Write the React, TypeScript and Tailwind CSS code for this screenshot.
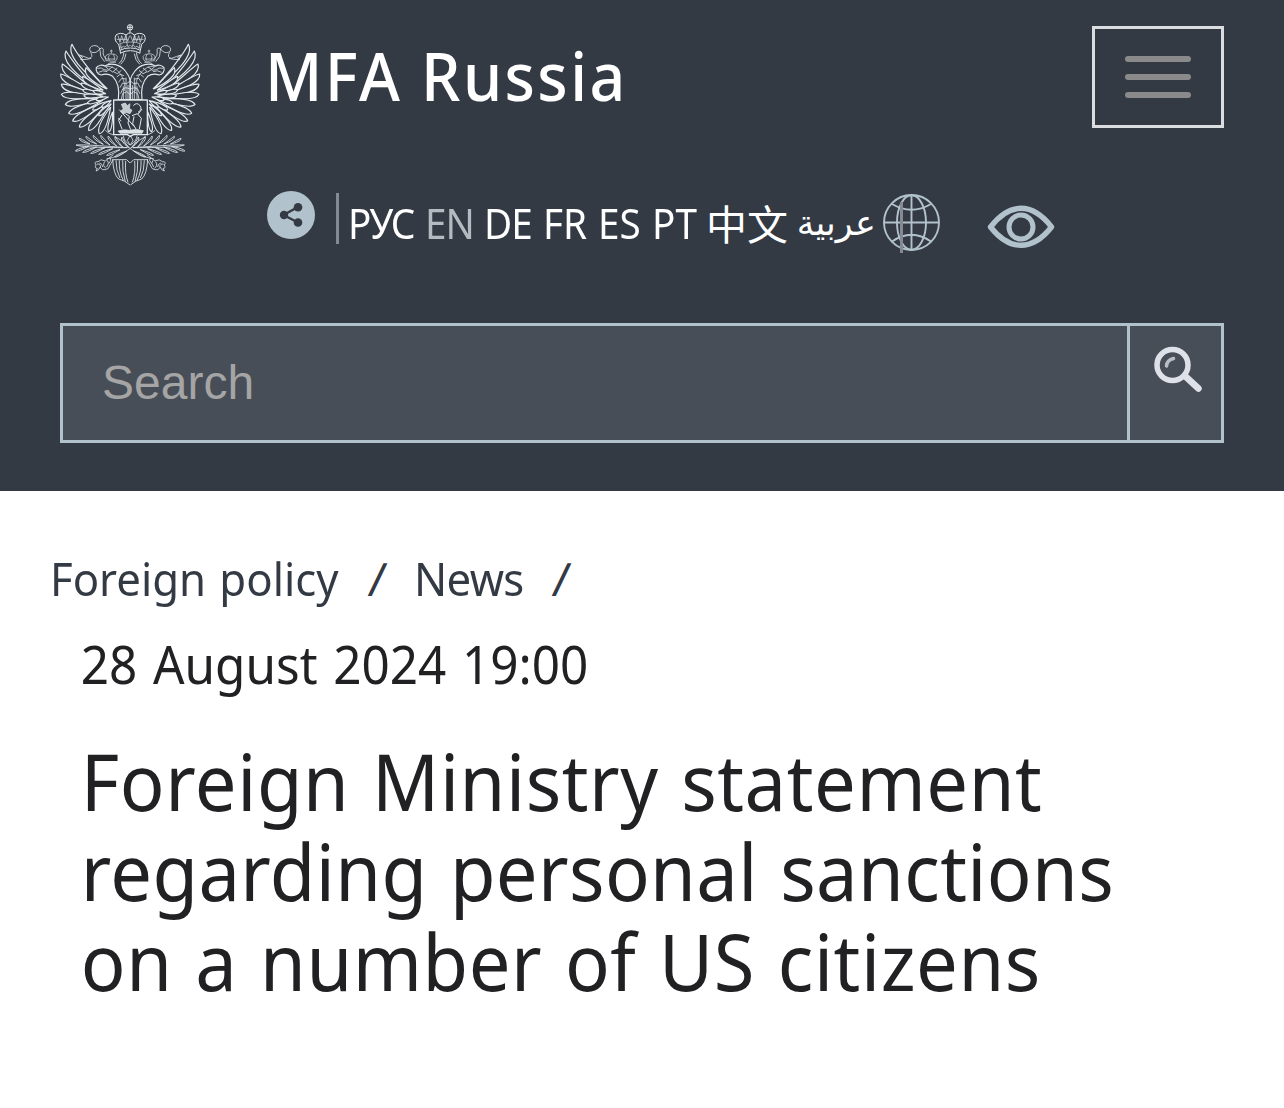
type Feather = [number, number, number, number, number];

// x/y of the root, x/y of the tip, width
const feathers: Feather[] = [
  [172, 222, 66, 88, 17],
  [135, 215, 48, 108, 16],
  [130, 224, 37, 147, 18],
  [132, 232, 32, 177, 18],
  [135, 240, 34, 208, 18],
  [140, 246, 34, 238, 18],
  [150, 252, 46, 268, 18],
  [158, 256, 56, 295, 18],
  [164, 262, 68, 318, 17],
  [170, 266, 88, 336, 17],
  [176, 270, 116, 346, 17],
  [182, 276, 148, 356, 17],
  [188, 290, 176, 350, 10],
  [170, 222, 108, 158, 14],
  [160, 226, 98, 184, 13],
  [158, 232, 94, 204, 12],
  [158, 238, 98, 224, 11],
  [160, 244, 102, 242, 11],
  [168, 250, 112, 264, 11],
  [176, 258, 128, 284, 11],
  [184, 266, 146, 302, 10],
  [168, 236, 130, 228, 9],
  [176, 246, 138, 254, 9],
  [184, 256, 156, 276, 9],
];

const leaves: Feather[] = [
  [232, 398, 78, 390, 5],
  [120, 387, 88, 370, 5],
  [140, 387, 108, 364, 5],
  [160, 388, 130, 361, 5],
  [180, 390, 153, 361, 5],
  [200, 393, 175, 363, 5],
  [218, 396, 196, 364, 5],
  [236, 398, 216, 366, 5],
  [116, 394, 76, 408, 5],
  [140, 396, 98, 412, 5],
  [165, 398, 122, 415, 5],
  [188, 401, 146, 418, 5],
  [210, 404, 170, 421, 5],
  [230, 408, 194, 426, 5],
];

// rounded blade, bowed outwards the more it points up
function featherPath([x1, y1, x2, y2, w]: Feather) {
  const dx = x2 - x1;
  const dy = y2 - y1;
  const len = Math.hypot(dx, dy);
  const ux = -dy / len;
  const uy = dx / len;
  const bow = Math.max(0, ux) * len * 0.14;
  const at = (t: number, off: number) =>
    `${(x1 + dx * t + ux * off).toFixed(1)} ${(y1 + dy * t + uy * off).toFixed(1)}`;
  return `M${x1} ${y1}C${at(0.4, w * 0.5 - bow)} ${at(0.88, w * 0.8 - bow)} ${x2} ${y2}C${at(0.92, -w * 0.8 - bow)} ${at(0.5, -w * 0.6 - bow)} ${x1} ${y1}`;
}

function EagleHalf() {
  return (
    <>
      {feathers.map((f) => (
        <path key={f.join()} d={featherPath(f)} fill="#333a44" strokeWidth="3.5" />
      ))}
      {leaves.map((f) => (
        <path key={f.join()} d={featherPath(f)} strokeWidth="2.6" />
      ))}
      {/* head and neck */}
      <path d="M205 254C210 218 202 198 188 184C176 176 164 176 154 180C144 178 136 170 139 158C145 149 158 149 164 153C184 142 210 148 226 168C234 178 238 186 240 194V254Z" fill="#333a44" strokeWidth="3.5" />
      <path d="M142 160q14-4 20 4l14 2M146 172q12-8 26-2M164 153l12 10l12-8M176 163l12 8l14-12M190 170l12 6l12-10M200 186l10-8l12 4M206 202l9-12l12 2M210 218l8-14l12 2l10-8M212 236l6-14l10-4l12 4M214 252l4-16l12-6l10 8M228 254v-66M220 254v-40M234 254v-44" strokeWidth="2.4" />
      <path d="M168 154q26-2 44 24q14 20 12 50" />
      {/* small crown with ribbon */}
      <path d="M168 137q-6-14 4-18q8-4 12-2q14-2 18 8q0 8-6 14zM172 132h24M178 136q-6-10 0-16M192 136q4-10-2-18M184 116v-12M180 108h8M174 146q10-6 24-4" />
      <path d="M164 140Q148 126 150 106Q148 90 130 92Q116 96 120 108Q132 118 144 108Q156 92 160 104Q156 124 172 134M122 112Q132 128 116 130Q102 124 88 120L98 127L92 134Q112 134 124 130" strokeWidth="2.4" />
      <path d="M222 112Q218 138 206 146M228 116Q226 136 212 148" strokeWidth="2.5" />
      {/* imperial crown */}
      <path d="M210 106L206 88Q190 76 198 60Q212 50 228 60Q238 52 240 54M210 106Q224 98 240 99M212 114Q224 107 240 107M210 106l2 10" strokeWidth="3" />
      <path d="M206 88Q222 80 240 81M204 62l6 20l5-20l6 18l6-19l6 18l6-17M200 73h32M210 94l5 5l5-6l5 4l5-6l5 4l5-4M228 60q-2 20 6 34M212 88l2 14" />
      {/* claws and tail */}
      <path d="M190 419Q176 430 166 438Q152 430 144 440Q130 440 138 450Q132 460 142 460L138 468Q148 466 150 456Q156 468 166 464Q176 464 180 450L190 434M148 444q10 2 10 12M164 440q-8 12 4 20M172 436q8 8-2 20M140 448q10-4 12 8M180 428q6 8-4 18" strokeWidth="2.4" />
      <path d="M188 432Q190 478 206 492Q224 496 240 510M190 434h40l10 10M198 436Q198 468 210 489M208 436Q206 470 220 496M218 436Q216 470 226 500M227 438Q224 476 234 502" strokeWidth="2.6" />
      <path d="M190 360q-18-6-24-14M194 366q20 6 46 34q34 26 72 32M240 362l-8 14l8 14M220 362q2 18 20 28" strokeWidth="2.4" />
    </>
  );
}

function Emblem() {
  return (
    <svg viewBox="0 0 480 540" className="h-[180px] w-40" fill="none" stroke="#e3e8eb" strokeWidth="2" strokeLinejoin="round">
      <EagleHalf />
      <g transform="translate(481 0) scale(-1 1)">
        <EagleHalf />
      </g>
      <circle cx="240" cy="37" r="8" strokeWidth="3" />
      <path d="M240 30v24M233 37h14" strokeWidth="3" />
      <path d="M191 255H292V359H250L241 364L232 359H191Z" fill="#333a44" strokeWidth="4" />
      <path d="M204 348Q222 342 238 346Q258 340 280 347L276 355H210Z" fill="#dbe1e5" />
      <path d="M214 268l12-4l6 8l8-6l-2 14l8 6l-6 10l-12-4l-8 6l-8-10l8-6z" fill="#c3cacf" />
      <path d="M226 296l12 8l-4 20l8 20M216 300l-10 16l10 26M246 302l16-6l12 14l-6 32M250 272q10-12 20 0q8 12-6 20M264 298l12-16M252 304l-4 22l10 16M208 284l44 50M204 310l10 8" strokeWidth="3" />
    </svg>
  );
}

function ShareIcon() {
  return (
    <svg viewBox="0 0 48 48" className="size-12">
      <circle cx="24" cy="24" r="24" fill="#b2c2cc" />
      <path d="M31 16L16.500 24L31 31.500" fill="none" stroke="#333a44" strokeWidth="2.400" />
      <g fill="#333a44">
        <circle cx="17" cy="24" r="4.200" />
        <circle cx="31" cy="16.300" r="4.300" />
        <circle cx="31" cy="31.500" r="4.300" />
      </g>
    </svg>
  );
}

function GlobeIcon() {
  return (
    <svg viewBox="0 0 58 58" className="size-[58px]" fill="none" stroke="#b2c2cc" strokeWidth="1.900">
      <circle cx="28.500" cy="28.500" r="27.500" />
      <ellipse cx="28.500" cy="28.500" rx="14.500" ry="27.200" />
      <path d="M1 28.500H56M28.500 1V56M9 10Q28.500 21.500 48 10M9 47.500Q28.500 34 48 47.500" />
    </svg>
  );
}

function EyeIcon() {
  return (
    <svg viewBox="0 0 68 44" className="h-11 w-[68px]" fill="none" stroke="#b2c2cc">
      <path d="M3.500 22Q18 3.300 34 3.300Q50 3.300 64.500 22Q50 40.300 34 40.300Q18 40.300 3.500 22Z" strokeWidth="5.400" strokeLinejoin="round" />
      <circle cx="34" cy="22" r="12" strokeWidth="5" />
    </svg>
  );
}

function SearchIcon() {
  return (
    <svg viewBox="0 0 50 48" className="h-12 w-[50px] blur-[0.6px]" fill="none" stroke="#dfe1e8" strokeLinecap="round">
      <circle cx="18.500" cy="19" r="15.500" strokeWidth="5.500" />
      <path d="M31 30L44.500 42.500" strokeWidth="6.500" />
      <path d="M12.500 20Q13 14 19.500 12.500" strokeWidth="3.500" stroke="#b9bdc5" />
    </svg>
  );
}

const languages = [
  { label: "РУС", className: "w-[77px] tracking-[-1.2px]" },
  { label: "EN", className: "w-[59px] tracking-[-1px] text-[#b5bac1]" },
  { label: "DE", className: "w-[59px] tracking-[-1px]" },
  { label: "FR", className: "w-[55px]" },
  { label: "ES", className: "w-[54px]" },
  { label: "PT", className: "w-[54px]" },
];

const titleLines = [
  { text: "Foreign Ministry statement", className: "tracking-[0.6px]" },
  { text: "regarding personal sanctions", className: "tracking-[0.4px]" },
  { text: "on a number of US citizens", className: "tracking-[0.6px]" },
];

export default function App() {
  return (
    <div className="h-[1108px] w-[1284px] overflow-hidden bg-white font-['Noto_Sans','Noto_Sans_CJK_SC',sans-serif] text-[#212124]">
      <header className="h-[491px] bg-[#333a44] text-white">
        <div className="flex h-[323px]">
          <div className="w-[267px] shrink-0 pt-[15px] pl-[50px]">
            <Emblem />
          </div>
          <div className="flex-1">
            <div className="flex h-[191px] justify-between pt-[26px] pr-[60px]">
              <h1 className="-ml-[2px] origin-left scale-x-92 text-[68px] leading-[98px] font-medium tracking-[2.6px] whitespace-nowrap">MFA Russia</h1>
              <button className="flex h-[102px] w-[132px] flex-col items-center justify-center gap-3 border-3 border-[#dcdde1]">
                <span className="h-1.5 w-[66px] rounded-full bg-[#8a8a8a]" />
                <span className="h-1.5 w-[66px] rounded-full bg-[#8a8a8a]" />
                <span className="h-1.5 w-[66px] rounded-full bg-[#8a8a8a]" />
              </button>
            </div>
            <div className="flex">
              <ShareIcon />
              <span className="mt-0.5 ml-[21px] h-[51px] w-[3px] bg-[#858991]" />
              <nav className="ml-[9px] flex text-[42px] leading-[64px] whitespace-nowrap">
                {languages.map((l) => (
                  <a key={l.label} className={`origin-left scale-x-92 ${l.className}`}>{l.label}</a>
                ))}
                <a className="w-[87px] font-['Noto_Sans_CJK_SC',sans-serif] text-[41px] leading-[62px]">中文</a>
                <a className="w-[83px] font-['DejaVu_Sans',sans-serif] text-[35px]" dir="rtl" lang="ar">عربية</a>
              </nav>
              <div className="relative mt-[3px] ml-[7px]">
                <GlobeIcon />
                <span className="absolute top-2 left-[17px] h-[51px] w-[3px] bg-[#858991]" />
              </div>
              <div className="mt-3.5 ml-[46px]">
                <EyeIcon />
              </div>
            </div>
          </div>
        </div>
        <form className="mx-[60px] flex h-[120px] border-3 border-[#b2c2cc] bg-[#484e58]">
          <div className="flex-1 pl-[39px] font-['Liberation_Sans',sans-serif] text-[48px] leading-[114px] text-[#a5a5a5]">Search</div>
          <div className="w-[94px] border-l-3 border-[#b2c2cc] pt-5 pl-6">
            <SearchIcon />
          </div>
        </form>
      </header>
      <main>
        <div className="flex h-[134px] pt-[49px] pl-[50px] text-[46px] leading-[77px] whitespace-nowrap text-[#333a44]">
          <span className="w-[319px] origin-left scale-x-95 [word-spacing:2px]">Foreign policy</span>
          <span className="w-[45px]"><i className="inline-block -skew-x-6 not-italic">/</i></span>
          <span className="w-[139px] origin-left scale-x-95 tracking-[-0.7px]">News</span>
          <span><i className="inline-block -skew-x-6 not-italic">/</i></span>
        </div>
        <div className="h-[112px] origin-left scale-x-95 pl-[85px] text-[52px] leading-[77px] whitespace-nowrap [word-spacing:3px]">28 August 2024 19:00</div>
        <h2 className="-mt-px origin-left scale-x-95 pl-[85px] text-[78px] leading-[90px] [word-spacing:3px]">
          {titleLines.map((line) => (
            <span key={line.text} className={`block whitespace-nowrap ${line.className}`}>{line.text}</span>
          ))}
        </h2>
      </main>
    </div>
  );
}
